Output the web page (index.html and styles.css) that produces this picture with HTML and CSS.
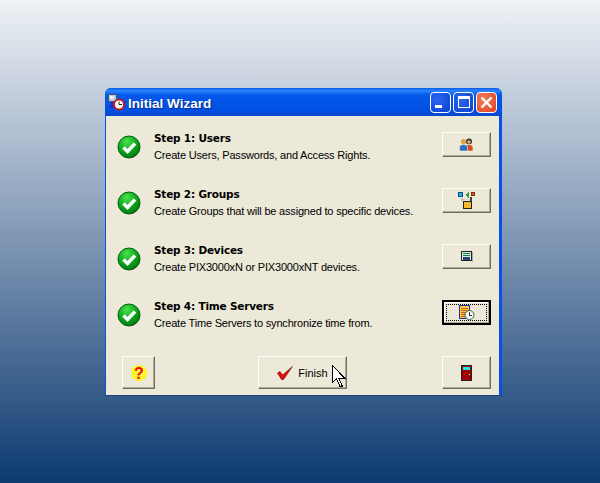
FILE: index.html
```html
<!DOCTYPE html>
<html lang="en">

<head>
  <meta charset="utf-8">
  <title>Initial Wizard</title>
  <link rel="stylesheet" href="styles.css">
</head>

<body>
  <svg width="0" height="0" class="defs">
    <defs>
      <radialGradient id="green" cx="40%" cy="25%" r="80%">
        <stop offset="0" stop-color="#4fe04f" />
        <stop offset="0.5" stop-color="#0cae1e" />
        <stop offset="1" stop-color="#04700f" />
      </radialGradient>
      <pattern id="dither" width="2" height="2" patternUnits="userSpaceOnUse">
        <rect width="2" height="2" fill="#fbf200" />
        <rect width="1" height="1" fill="#fffbb0" />
      </pattern>
      <symbol id="ok" viewBox="0 0 24 24">
        <circle cx="12" cy="12" r="11" fill="url(#green)" stroke="#06600f" stroke-width="1" />
        <path d="M6.5 12.5l4 4 7.5-8" fill="none" stroke="#fff" stroke-width="3.4" />
      </symbol>
    </defs>
  </svg>

  <div class="window">
    <div class="titlebar">
      <svg class="app-icon" width="18" height="18" viewBox="0 0 18 18">
        <rect x="1.5" y="1.5" width="8" height="7" fill="#b9c6d6" stroke="#46586e" />
        <rect x="3" y="3" width="4" height="3" fill="#e8f0f8" />
        <path d="M5 9v5M2 14h5" stroke="#2030c0" stroke-width="2" fill="none" />
        <circle cx="12" cy="11.5" r="5" fill="#fff" stroke="#c02018" stroke-width="2" />
        <path d="M12 8.500v3h3" stroke="#222" stroke-width="1" fill="none" />
      </svg>
      <span class="title-text">Initial Wizard</span>
      <div class="caption-btns">
        <span class="cap cap-min"><i></i></span>
        <span class="cap cap-max"><i></i></span>
        <span class="cap cap-close">
          <svg width="15" height="15" viewBox="0 0 15 15"><path d="M2.500 2.500l10 10M12.500 2.500l-10 10" stroke="#fff" stroke-width="2.400" /></svg>
        </span>
      </div>
    </div>

    <div class="client">
      <div class="step">
        <svg class="check" width="24" height="24"><use href="#ok" /></svg>
        <div class="step-text">
          <h1>Step 1: Users</h1>
          <p>Create Users, Passwords, and Access Rights.</p>
        </div>
        <button class="btn btn-step">
          <svg width="17" height="14" viewBox="0 0 17 14">
            <circle cx="11" cy="3.500" r="3" fill="#303030" />
            <circle cx="11" cy="4" r="1.800" fill="#e8a878" />
            <path d="M7.500 13V9q0-2.500 3.500-2.500T15 9v4z" fill="#d8501e" stroke="#fff" stroke-width="0.500" />
            <circle cx="5.500" cy="3.500" r="2.600" fill="#e8a040" />
            <path d="M1.500 13V9q0-2.500 4-2.500t4 2.500v4z" fill="#2a70c0" stroke="#fff" stroke-width="0.500" />
          </svg>
        </button>
      </div>

      <div class="step">
        <svg class="check" width="24" height="24"><use href="#ok" /></svg>
        <div class="step-text">
          <h1>Step 2: Groups</h1>
          <p>Create Groups that will be assigned to specific devices.</p>
        </div>
        <button class="btn btn-step">
          <svg width="18" height="17" viewBox="0 0 18 17" shape-rendering="crispEdges">
            <rect x="0.500" y="0.500" width="4" height="4" fill="#20a8e8" stroke="#105080" />
            <path d="M7 3l4-3v6z" fill="#40a040" />
            <rect x="13.500" y="0.500" width="3" height="3" fill="#e85010" stroke="#803010" />
            <path d="M3 6h2v1h2v1H5v1H3z" fill="#c0c0c0" />
            <rect x="5.500" y="9.500" width="8" height="7" fill="#f8b830" stroke="#222" />
            <rect x="12" y="5" width="2" height="4" fill="#444" />
            <rect x="8" y="7" width="4" height="2" fill="#ddd" />
          </svg>
        </button>
      </div>

      <div class="step">
        <svg class="check" width="24" height="24"><use href="#ok" /></svg>
        <div class="step-text">
          <h1>Step 3: Devices</h1>
          <p>Create PIX3000xN or PIX3000xNT devices.</p>
        </div>
        <button class="btn btn-step">
          <svg width="12" height="11" viewBox="0 0 12 11" shape-rendering="crispEdges">
            <rect x="0.500" y="0.500" width="10" height="9" fill="#e0e8e8" stroke="#222" />
            <rect x="2" y="2" width="7" height="1" fill="#108040" />
            <rect x="2" y="4" width="7" height="1" fill="#108040" />
            <rect x="2" y="6" width="7" height="3" fill="#204878" />
            <rect x="11" y="1" width="1" height="10" fill="#aaa" />
          </svg>
        </button>
      </div>

      <div class="step">
        <svg class="check" width="24" height="24"><use href="#ok" /></svg>
        <div class="step-text">
          <h1>Step 4: Time Servers</h1>
          <p>Create Time Servers to synchronize time from.</p>
        </div>
        <button class="btn btn-step btn-default">
          <span class="focus">
            <svg width="16" height="15" viewBox="0 0 16 15" shape-rendering="crispEdges">
              <rect x="0.500" y="0.500" width="10" height="13" fill="#f8d040" stroke="#2030a0" />
              <path d="M2 3h7M2 5h7M2 7h5M2 9h4M2 11h4" stroke="#d85020" />
              <circle cx="10.500" cy="10" r="4.500" fill="#f4f4f4" stroke="#406850" shape-rendering="auto" />
              <path d="M10.500 7v3h2" stroke="#333" fill="none" />
            </svg>
          </span>
        </button>
      </div>

      <div class="footer">
        <button class="btn btn-help">
          <svg width="16" height="16" viewBox="0 0 16 16">
            <circle cx="8" cy="8" r="8" fill="url(#dither)" />
            <text x="8" y="13.500" class="qmark">?</text>
          </svg>
        </button>
        <button class="btn btn-finish">
          <svg width="16" height="14" viewBox="0 0 16 14">
            <path d="M0.500 7l2.500-1.500 2.500 3.500L15.500 0.500 6.500 13.500H4.500z" fill="#f00808" stroke="#300" stroke-width="0.500" />
          </svg>
          <span>Finish</span>
        </button>
        <button class="btn btn-exit">
          <svg width="11" height="16" viewBox="0 0 11 16" shape-rendering="crispEdges">
            <rect x="0.500" y="0.500" width="10" height="15" fill="#a00000" stroke="#222" />
            <rect x="2" y="2" width="7" height="3" fill="#20e8e8" />
            <rect x="8" y="9" width="1" height="1" fill="#f8f0a0" />
          </svg>
        </button>
      </div>

      <svg class="cursor" width="14" height="23" viewBox="0 0 14 23" shape-rendering="crispEdges">
        <path d="M0.500 0.500v17l4-4 3.500 8h2.500l-3.500-8h6z" fill="#fff" stroke="#000" />
      </svg>
    </div>
  </div>
</body>

</html>
```

FILE: styles.css
```css
html, body {
  margin: 0;
  height: 100%;
}

body {
  padding: 88px 0 0 105px;
  box-sizing: border-box;
  overflow: hidden;
  background: linear-gradient(#eff2f6, #0d3a70);
  font-family: "Liberation Sans", Arial, sans-serif;
}

.defs {
  position: absolute;
}

.window {
  width: 397px;
  height: 308px;
  box-sizing: border-box;
  display: flex;
  flex-direction: column;
  background: #0850e6;
  border-radius: 6px 6px 0 0;
  border-bottom: 1px solid #1d4478;
}

.titlebar {
  height: 28px;
  flex: none;
  display: flex;
  align-items: center;
  padding: 0 5px 0 2px;
  background: linear-gradient(#0a5ce8 0, #2a85ff 10%, #0458e8 25%, #0050e4 80%, #0a48c8 100%);
  border-radius: 6px 6px 0 0;
}

.app-icon {
  flex: none;
}

.title-text {
  margin: 2px 0 0 3px;
  color: #fff;
  font: bold 13.500px "Liberation Sans", sans-serif;
  text-shadow: 1px 1px 1px #0a2a90;
}

.caption-btns {
  margin-left: auto;
  display: flex;
  gap: 2px;
}

.cap {
  width: 21px;
  height: 21px;
  box-sizing: border-box;
  border: 1px solid #fff;
  border-radius: 4px;
  background: radial-gradient(circle at 35% 35%, #2a68f0, #0a40d0);
  display: flex;
  align-items: center;
  justify-content: center;
}

.cap-min i {
  width: 7px;
  height: 3px;
  background: #fff;
  margin: 9px 5px 0 0;
}

.cap-max i {
  width: 12px;
  height: 12px;
  box-sizing: border-box;
  border: 1px solid #fff;
  border-top-width: 3px;
}

.cap-close {
  background: radial-gradient(circle at 35% 35%, #f08060, #e04018);
}

.client {
  flex: 1;
  margin: 0 3px 0 1px;
  padding: 16px 8px 0 11px;
  background: #ece9d8;
  position: relative;
}

.step {
  height: 56px;
  display: flex;
  align-items: flex-start;
}

.check {
  flex: none;
  margin-top: 3px;
}

.step-text {
  margin: -1px 0 0 13px;
  flex: 1;
}

.step-text h1 {
  margin: 0;
  font: bold 10.500px/15px "DejaVu Sans", sans-serif;
  letter-spacing: -0.2px;
  color: #000;
}

.step-text p {
  margin: 2px 0 0;
  font-size: 11px;
  line-height: 15px;
  letter-spacing: -0.19px;
  color: #000;
}

.btn {
  padding: 0;
  box-sizing: border-box;
  background: #ece9d8;
  border: 1px solid;
  border-color: #fff #716f64 #716f64 #fff;
  box-shadow: inset -1px -1px 0 #aca899;
  display: flex;
  align-items: center;
  justify-content: center;
  font-family: "Liberation Sans", Arial, sans-serif;
  font-size: 11px;
  color: #000;
}

.btn-step {
  width: 49px;
  height: 25px;
  flex: none;
}

.btn-default {
  border: 1px solid #000;
  outline: 1px solid #000;
  outline-offset: -2px;
  box-shadow: inset -2px -2px 0 #aca899, inset 2px 2px 0 #fff;
}

.focus {
  width: 41px;
  height: 17px;
  box-sizing: border-box;
  border: 1px dotted #000;
  display: flex;
  align-items: center;
  justify-content: center;
}

.footer {
  display: flex;
  align-items: flex-start;
  padding-left: 5px;
}

.btn-help {
  width: 33px;
  height: 33px;
}

.btn-finish {
  width: 89px;
  height: 33px;
  margin-left: 103px;
  gap: 5px;
}

.btn-exit {
  width: 49px;
  height: 33px;
  margin-left: 95px;
}

.qmark {
  font: bold 16px "Liberation Sans", sans-serif;
  fill: #f00808;
  text-anchor: middle;
}

.cursor {
  position: absolute;
  left: 226px;
  top: 249px;
}
```
